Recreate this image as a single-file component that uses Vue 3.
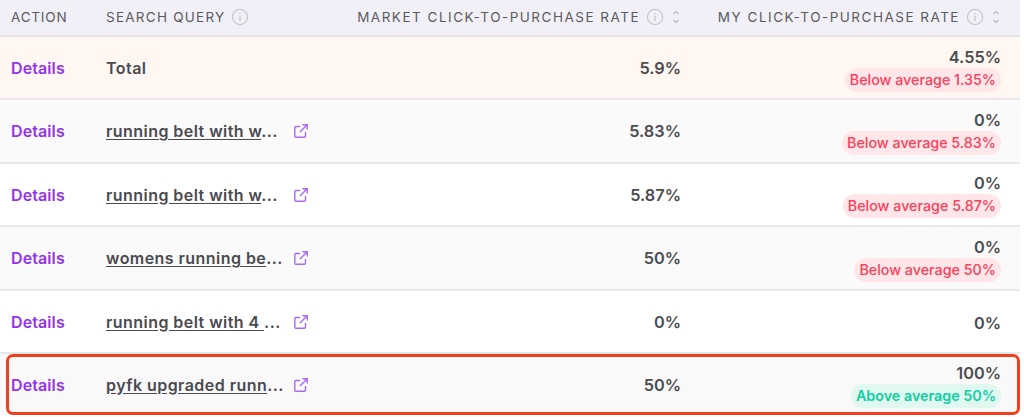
<script setup>
const rows = [
  { q: 'Total', total: true, m: '5.9%', my: '4.55%', tag: 'Below average 1.35%', bad: true },
  { q: 'running belt with w', m: '5.83%', my: '0%', tag: 'Below average 5.83%', bad: true },
  { q: 'running belt with w', m: '5.87%', my: '0%', tag: 'Below average 5.87%', bad: true },
  { q: 'womens running be', m: '50%', my: '0%', tag: 'Below average 50%', bad: true },
  { q: 'running belt with 4 ', m: '0%', my: '0%' },
  { q: 'pyfk upgraded runn', m: '50%', my: '100%', tag: 'Above average 50%', bad: false, mark: true },
]
</script>

<template>
  <div class="page">
    <div class="table">
      <div class="row head">
        <div class="c-action">ACTION</div>
        <div class="c-query">
          SEARCH QUERY
          <svg class="info" viewBox="0 0 18 18"><circle cx="9" cy="9" r="7.6" /><path d="M9 8v5M9 5v1.4" /></svg>
        </div>
        <div class="c-num">
          MARKET CLICK-TO-PURCHASE RATE
          <svg class="info" viewBox="0 0 18 18"><circle cx="9" cy="9" r="7.6" /><path d="M9 8v5M9 5v1.4" /></svg>
          <svg class="sort" viewBox="0 0 8 16"><path d="M1.5 5 4 2.5 6.500 5M1.500 11 4 13.500 6.500 11" /></svg>
        </div>
        <div class="c-num last">
          MY CLICK-TO-PURCHASE RATE
          <svg class="info" viewBox="0 0 18 18"><circle cx="9" cy="9" r="7.6" /><path d="M9 8v5M9 5v1.4" /></svg>
          <svg class="sort" viewBox="0 0 8 16"><path d="M1.5 5 4 2.5 6.500 5M1.500 11 4 13.500 6.500 11" /></svg>
        </div>
      </div>
      <div v-for="(r, i) in rows" :key="i" class="row body" :class="{ total: r.total, mark: r.mark }">
        <div class="c-action details">Details</div>
        <div class="c-query">
          <template v-if="r.total"><span class="plain">Total</span></template>
          <template v-else>
            <span class="qtext"><span class="link">{{ r.q }}</span>...</span>
            <svg class="ext" viewBox="0 0 16 16"><path d="M12.500 9v4a1.200 1.200 0 0 1-1.200 1.200H3a1.200 1.200 0 0 1-1.200-1.200V4.700A1.200 1.200 0 0 1 3 3.500h4M9.500 1.800h4.700v4.700M14.200 1.800 7 9" /></svg>
          </template>
        </div>
        <div class="c-num val">{{ r.m }}</div>
        <div class="c-my">
          <div class="val">{{ r.my }}</div>
          <div v-if="r.tag" class="tag" :class="r.bad ? 'bad' : 'good'">{{ r.tag }}</div>
        </div>
      </div>
    </div>
  </div>
</template>

<style scoped>
.page {
  width: 1024px;
  height: 417px;
  background: #fff;
  overflow: hidden;
  font-family: Inter, "Liberation Sans", sans-serif;
  color: #4a4a4f;
}
.table {
  width: 1020px;
  box-sizing: border-box;
}
.row {
  display: grid;
  grid-template-columns: 106px 232px 343px 339px;
  align-items: center;
  box-sizing: border-box;
}
.head {
  height: 37px;
  background: #f2f0f7;
  border-bottom: 2px solid #e6e5ea;
  font-size: 13.500px;
  letter-spacing: 1.500px;
  color: #5b5a60;
  padding-bottom: 1px;
  white-space: nowrap;
}
.head .c-action {
  letter-spacing: 0.800px;
}
.head .c-query {
  letter-spacing: 1.250px;
}
.body {
  height: 63.500px;
  background: #fff;
  border-bottom: 2px solid #e8e8ea;
  padding-top: 1px;
  position: relative;
}
.body:nth-child(odd) {
  background: #fafafa;
}
.body.total {
  background: #fff8f2;
  height: 63px;
}
.body.mark {
  background: #f9f9f9;
  border-bottom: 0;
  padding-top: 0;
  height: 61px;
}
.body.mark::after {
  content: "";
  position: absolute;
  left: 6px;
  right: 0;
  top: 0;
  height: 61px;
  box-sizing: border-box;
  border: 3px solid #f0401f;
  border-radius: 7px;
}
.c-action {
  padding-left: 11px;
}
.c-query {
  display: flex;
  align-items: center;
  gap: 6px;
}
.c-num {
  display: flex;
  align-items: center;
  justify-content: flex-end;
  gap: 6px;
}
.c-num.last {
  padding-right: 19px;
}
.details {
  font-size: 16px;
  font-weight: 600;
  letter-spacing: 0.1px;
  color: #9333ea;
}
.plain {
  font-size: 16px;
  font-weight: 600;
  letter-spacing: 0.45px;
  color: #4a4a4f;
}
.qtext {
  width: 181px;
  font-size: 16px;
  font-weight: 600;
  letter-spacing: 0.45px;
  color: #4a4a4f;
  white-space: pre;
}
.link {
  text-decoration: underline;
  text-underline-offset: 2px;
}
.val {
  font-size: 16.300px;
  font-weight: 600;
  color: #4c4c50;
  text-align: right;
}
.c-my {
  display: flex;
  flex-direction: column;
  align-items: flex-end;
  gap: 1px;
  padding-top: 2px;
  padding-right: 19px;
}
.tag {
  height: 24px;
  line-height: 24px;
  border-radius: 12px;
  padding: 0 5px;
  font-size: 14.300px;
  font-weight: 500;
}
.bad {
  background: #ffe6e8;
  color: #fb3f5c;
}
.good {
  background: #e1f8f1;
  color: #0fcfa3;
  font-weight: 600;
}
.info {
  width: 18px;
  height: 18px;
  fill: none;
  stroke: #c8c8cc;
  stroke-width: 1.300;
}
.sort {
  width: 8px;
  height: 16px;
  fill: none;
  stroke: #b5b5ba;
  stroke-width: 1.100;
  margin-left: 2px;
  margin-right: 1px;
}
.ext {
  width: 16px;
  height: 16px;
  fill: none;
  stroke: #a66bf0;
  stroke-width: 1.400;
}
</style>
